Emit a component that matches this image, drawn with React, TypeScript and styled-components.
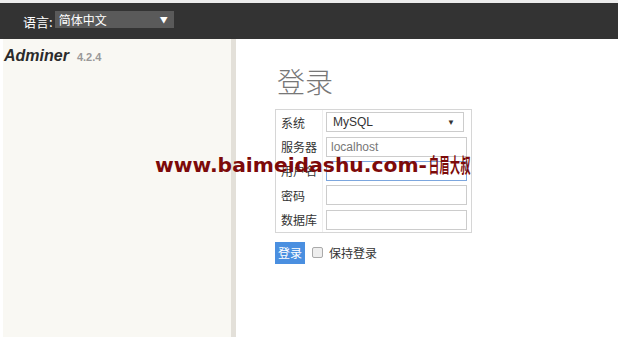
import React from "react";
import styled, { createGlobalStyle } from "styled-components";

const GlobalStyle = createGlobalStyle`
	html, body {
		margin: 0;
		padding: 0;
		background: #ffffff;
		font-family: "Liberation Sans", "Noto Sans CJK SC", sans-serif;
	}
`;

const Page = styled.div`
	width: 618px;
	height: 337px;
	overflow: hidden;
	position: relative;
	border-top: 3px solid #ececec;
	box-sizing: border-box;
	display: flex;
	flex-direction: column;
`;

const TopBar = styled.header`
	height: 36px;
	flex: 0 0 36px;
	background: #333333;
	display: flex;
	align-items: center;
	padding-left: 23px;
	gap: 2px;
`;

const LangLabel = styled.span`
	color: #ffffff;
	font-size: 13px;
	font-family: "Noto Sans CJK SC", sans-serif;
`;

const LangSelect = styled.div`
	width: 119px;
	height: 17px;
	background: #5a5a5a;
	color: #ffffff;
	font-size: 12px;
	font-family: "Noto Sans CJK SC", sans-serif;
	display: flex;
	align-items: center;
	justify-content: space-between;
	padding: 0 6px 0 4px;
	box-sizing: border-box;
	margin-top: -3px;

	span:last-child {
		font-size: 8px;
	}
`;

const Body = styled.div`
	flex: 1;
	display: flex;
	padding-left: 3px;
`;

const Sidebar = styled.aside`
	width: 227px;
	background: #f9f8f3;
	border-right: 5px solid #e3e0d9;
	padding: 8px 0 0 1px;
	box-sizing: content-box;
`;

const Brand = styled.h1`
	margin: 0;
	font-size: 16px;
	font-style: italic;
	font-weight: bold;
	color: #2b2b2b;
	display: flex;
	align-items: baseline;
	gap: 8px;
`;

const Version = styled.span`
	font-style: normal;
	font-size: 11px;
	color: #999999;
`;

const Main = styled.main`
	flex: 1;
	padding: 23px 0 0 39px;
	font-family: "Noto Sans CJK SC", sans-serif;
`;

const Title = styled.h2`
	margin: 0 0 9px 2px;
	font-size: 28px;
	font-weight: 300;
	color: #777777;
	line-height: 38px;
`;

const Form = styled.div`
	width: 197px;
	border: 1px solid #d6d6d6;
	box-sizing: border-box;
	display: grid;
	grid-template-columns: 47px 1fr;
`;

const Label = styled.div`
	height: 24.4px;
	font-size: 12px;
	color: #333333;
	display: flex;
	align-items: center;
	padding-left: 5px;
	border-right: 1px solid #eeeeee;
`;

const Cell = styled.div`
	height: 24.4px;
	display: flex;
	align-items: center;
	padding: 0 4px 0 3px;
`;

const Field = styled.div<{ $focus?: boolean; $select?: boolean }>`
	width: ${(p) => (p.$select ? "138px" : "141px")};
	height: 20px;
	box-sizing: border-box;
	border: 1px solid ${(p) => (p.$focus ? "#7ca6de" : "#cccccc")};
	background: #ffffff;
	font-family: "Liberation Sans", sans-serif;
	font-size: 12px;
	color: ${(p) => (p.$select ? "#333333" : "#777777")};
	display: flex;
	align-items: center;
	justify-content: space-between;
	padding: 0 8px 0 ${(p) => (p.$select ? "6px" : "4px")};

	small {
		font-size: 8px;
		color: #333333;
	}
`;

const Actions = styled.div`
	display: flex;
	align-items: center;
	margin-top: 9px;
	gap: 6px;
`;

const Button = styled.button`
	width: 30px;
	height: 22px;
	border: none;
	background: #4a8fe0;
	color: #ffffff;
	font-size: 12px;
	font-family: "Noto Sans CJK SC", sans-serif;
	padding: 0;
`;

const Check = styled.span`
	width: 9px;
	height: 9px;
	border: 1px solid #aaaaaa;
	background: #eeeeee;
	border-radius: 2px;
	margin-left: 1px;
`;

const CheckText = styled.span`
	font-size: 12px;
	color: #333333;
`;

const Watermark = styled.div`
	position: absolute;
	left: 155px;
	top: 147px;
	font-family: "DejaVu Sans", sans-serif;
	font-weight: bold;
	font-size: 20.3px;
	color: #7d0a0a;
	white-space: nowrap;
	display: flex;
	align-items: center;
`;

const WatermarkCjk = styled.span`
	display: inline-block;
	width: 44px;
	margin-left: 2px;
	font-family: "Noto Sans CJK SC", sans-serif;
	font-weight: bold;
	font-size: 20px;
	transform: scaleX(0.5);
	transform-origin: left center;
	letter-spacing: 1px;
`;

const rows: { label: string; value?: string; focus?: boolean; select?: boolean }[] = [
	{ label: "系统", value: "MySQL", select: true },
	{ label: "服务器", value: "localhost" },
	{ label: "用户名", focus: true },
	{ label: "密码" },
	{ label: "数据库" },
];

const App = () => {
	return (
		<Page>
			<GlobalStyle />
			<TopBar>
				<LangLabel>语言:</LangLabel>
				<LangSelect>
					<span>简体中文</span>
					<span>▼</span>
				</LangSelect>
			</TopBar>
			<Body>
				<Sidebar>
					<Brand>
						Adminer <Version>4.2.4</Version>
					</Brand>
				</Sidebar>
				<Main>
					<Title>登录</Title>
					<Form>
						{rows.map((r) => (
							<React.Fragment key={r.label}>
								<Label>{r.label}</Label>
								<Cell>
									<Field $focus={r.focus} $select={r.select}>
										<span>{r.value}</span>
										{r.select && <small>▼</small>}
									</Field>
								</Cell>
							</React.Fragment>
						))}
					</Form>
					<Actions>
						<Button>登录</Button>
						<Check />
						<CheckText>保持登录</CheckText>
					</Actions>
				</Main>
			</Body>
			<Watermark>
				www.baimeidashu.com-<WatermarkCjk>白眉大叔</WatermarkCjk>
			</Watermark>
		</Page>
	);
};

export default App;
